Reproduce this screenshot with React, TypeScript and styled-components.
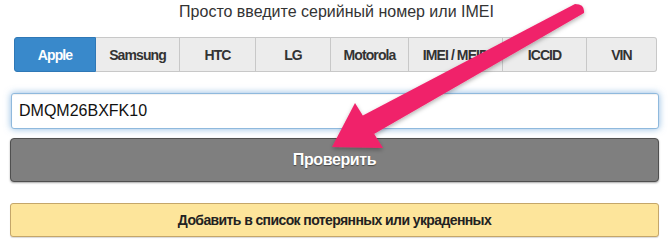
import React, { useState } from 'react';
import styled, { createGlobalStyle } from 'styled-components';

const GlobalStyle = createGlobalStyle`
  html, body {
    margin: 0;
    padding: 0;
    background: #ffffff;
    font-family: "Liberation Sans", Arial, sans-serif;
  }
`;

const Page = styled.div`
  position: relative;
  width: 671px;
  height: 245px;
  overflow: hidden;
  background: #fff;
`;

const Form = styled.div`
  display: flex;
  flex-direction: column;
  padding: 3px 12px 0 10px;
`;

const Title = styled.div`
  font-size: 16px;
  color: #333;
  text-align: center;
  line-height: 18px;
  padding-left: 4px;
`;

const Tabs = styled.div`
  display: flex;
  margin: 16px 3px 0 4px;
  height: 35px;
`;

const Tab = styled.div<{ $w: number; $active?: boolean }>`
  width: ${p => p.$w}px;
  flex: none;
  box-sizing: border-box;
  display: flex;
  align-items: center;
  justify-content: center;
  font-size: 14px;
  font-weight: bold;
  letter-spacing: -0.9px;
  color: ${p => (p.$active ? '#fff' : '#333')};
  background: ${p => (p.$active ? '#3989cb' : '#ececec')};
  border: 1px solid ${p => (p.$active ? '#2f78b6' : '#c8c8c8')};
  border-left-width: ${p => (p.$active ? 1 : 0)}px;
  &:first-child {
    border-radius: 3px 0 0 3px;
  }
  &:last-child {
    border-radius: 0 3px 3px 0;
  }
`;

const Input = styled.input`
  margin: 21px 0 0 1px;
  height: 36px;
  box-sizing: border-box;
  border: 1px solid #8fb9dd;
  border-radius: 3px;
  padding: 0 7px;
  font-family: "Liberation Sans", Arial, sans-serif;
  font-size: 16px;
  color: #111;
  box-shadow: 0 0 7px rgba(102, 160, 215, 0.75), inset 0 1px 1px rgba(0, 0, 0, 0.06);
  outline: none;
`;

const CheckButton = styled.button`
  margin-top: 9px;
  height: 44px;
  box-sizing: border-box;
  background: #7f7f7f;
  border: 1px solid #4f4f4f;
  border-radius: 4px;
  box-shadow: 0 1px 2px rgba(0, 0, 0, 0.35);
  color: #ffffff;
  font-family: "Liberation Sans", Arial, sans-serif;
  font-size: 16px;
  font-weight: bold;
  letter-spacing: -0.4px;
  text-shadow: 0 1px 1px rgba(0, 0, 0, 0.45);
  cursor: pointer;
`;

const ReportButton = styled.button`
  margin-top: 21px;
  height: 34px;
  box-sizing: border-box;
  background: #fde59b;
  border: 1px solid #c4a66a;
  border-radius: 3px;
  box-shadow: 0 1px 1px rgba(0, 0, 0, 0.15);
  color: #222;
  font-family: "Liberation Sans", Arial, sans-serif;
  font-size: 14px;
  font-weight: bold;
  letter-spacing: -0.6px;
  cursor: pointer;
`;

const ArrowLayer = styled.svg`
  position: absolute;
  left: 0;
  top: 0;
  pointer-events: none;
`;

const tabs = [
  { label: 'Apple', w: 82 },
  { label: 'Samsung', w: 84 },
  { label: 'HTC', w: 76 },
  { label: 'LG', w: 75 },
  { label: 'Motorola', w: 78 },
  { label: 'IMEI / MEID', w: 94 },
  { label: 'ICCID', w: 84 },
  { label: 'VIN', w: 70 },
];

const Arrow = () => (
  <ArrowLayer width="671" height="245" viewBox="0 0 671 245">
    <defs>
      <filter id="sh" x="-20%" y="-20%" width="140%" height="140%">
        <feDropShadow dx="0" dy="2" stdDeviation="2" floodColor="#000" floodOpacity="0.3" />
      </filter>
    </defs>
    <g filter="url(#sh)" fill="#f0246a">
      <path d="M575 4 Q585 4 584 13 L374 134 L360 117 Z" />
      <polygon points="332,147 355,103 383,148" />
    </g>
  </ArrowLayer>
);

export default function App() {
  const [active, setActive] = useState('Apple');
  const [value, setValue] = useState('DMQM26BXFK10');
  return (
    <Page>
      <GlobalStyle />
      <Form>
        <Title>Просто введите серийный номер или IMEI</Title>
        <Tabs>
          {tabs.map(t => (
            <Tab key={t.label} $w={t.w} $active={t.label === active} onClick={() => setActive(t.label)}>
              {t.label}
            </Tab>
          ))}
        </Tabs>
        <Input value={value} onChange={e => setValue(e.target.value)} />
        <CheckButton>Проверить</CheckButton>
        <ReportButton>Добавить в список потерянных или украденных</ReportButton>
      </Form>
      <Arrow />
    </Page>
  );
}
